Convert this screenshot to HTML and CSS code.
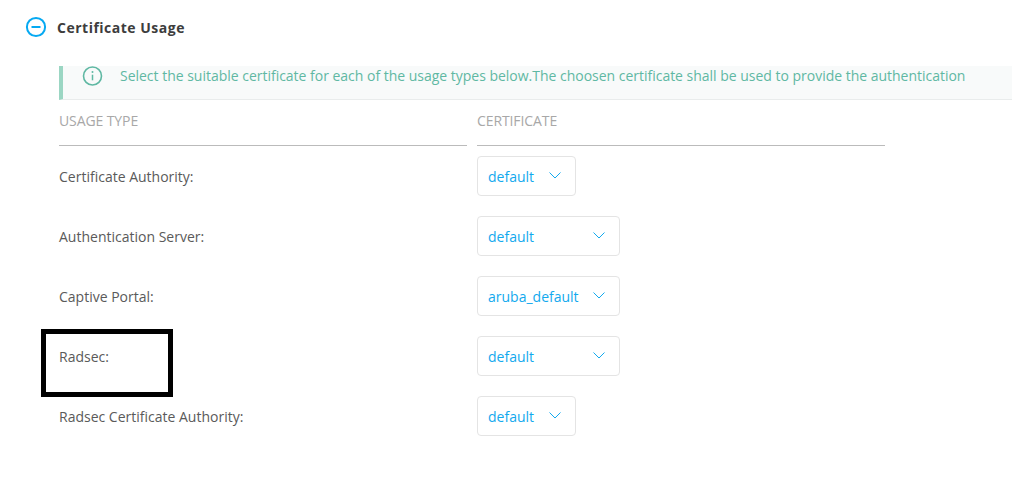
FILE: index.html
```html
<!DOCTYPE html>
<html lang="en">
<head>
<meta charset="utf-8">
<title>Certificate Usage</title>
<link rel="stylesheet" href="styles.css">
</head>
<body>
<main class="page">
  <header class="section-head">
    <svg class="collapse-icon" width="22" height="22" viewBox="0 0 22 22" aria-hidden="true">
      <circle cx="11" cy="11" r="9.1" fill="none" stroke="#05a9f2" stroke-width="2"/>
      <path d="M6.500 11h9" stroke="#05a9f2" stroke-width="2" fill="none"/>
    </svg>
    <h2 class="section-title">Certificate Usage</h2>
  </header>
  <div class="content">
    <div class="notice">
      <svg class="info-icon" width="21" height="20" viewBox="0 0 21 20" aria-hidden="true">
        <circle cx="10.500" cy="10" r="9" fill="none" stroke="#5fb8a3" stroke-width="1.600"/>
        <path d="M10.500 8.700v5.600" stroke="#5fb8a3" stroke-width="1.500" fill="none"/>
        <circle cx="10.500" cy="6" r="1" fill="#5fb8a3"/>
      </svg>
      <span class="notice-text">Select the suitable certificate for each of the usage types below.The choosen certificate shall be used to provide the authentication</span>
    </div>
    <div class="grid">
      <div class="col-head">USAGE TYPE</div>
      <div class="col-head">CERTIFICATE</div>

      <div class="label">Certificate Authority:</div>
      <div class="cell"><div class="select select-short"><span>default</span><svg class="chev" width="12" height="7" viewBox="0 0 12 7"><path d="M.5.5 6 6l5.500-5.500" fill="none" stroke="#12a9ee"/></svg></div></div>

      <div class="label">Authentication Server:</div>
      <div class="cell"><div class="select select-wide"><span>default</span><svg class="chev" width="12" height="7" viewBox="0 0 12 7"><path d="M.5.5 6 6l5.500-5.500" fill="none" stroke="#12a9ee"/></svg></div></div>

      <div class="label">Captive Portal:</div>
      <div class="cell"><div class="select select-wide"><span>aruba_default</span><svg class="chev" width="12" height="7" viewBox="0 0 12 7"><path d="M.5.5 6 6l5.500-5.500" fill="none" stroke="#12a9ee"/></svg></div></div>

      <div class="label">Radsec:</div>
      <div class="cell"><div class="select select-wide"><span>default</span><svg class="chev" width="12" height="7" viewBox="0 0 12 7"><path d="M.5.5 6 6l5.500-5.500" fill="none" stroke="#12a9ee"/></svg></div></div>

      <div class="label">Radsec Certificate Authority:</div>
      <div class="cell"><div class="select select-short"><span>default</span><svg class="chev" width="12" height="7" viewBox="0 0 12 7"><path d="M.5.5 6 6l5.500-5.500" fill="none" stroke="#12a9ee"/></svg></div></div>
    </div>
  </div>
  <div class="highlight"></div>
</main>
</body>
</html>
```
FILE: styles.css
```css
* { box-sizing: border-box; }
html, body { margin: 0; padding: 0; background: #fff; }
body { font-family: "Open Sans", "Liberation Sans", sans-serif; font-size: 14px; color: #555; overflow: hidden; }
.page { position: relative; width: 1012px; height: 491px; padding: 16px 0 0 25px; }
.section-head { display: flex; align-items: center; gap: 10px; height: 22px; }
.collapse-icon { flex: none; }
.section-title { margin: 0; font-size: 14px; font-weight: 700; color: #3d3d3d; letter-spacing: 0.5px; }
.content { margin: 28px 0 0 34px; }
.notice { display: flex; align-items: flex-start; height: 34px; background: #f8fafa; border-left: 4px solid #9bd6c3; border-bottom: 1px solid #e9ecec; padding-left: 19px; color: #5fb8a3; }
.info-icon { flex: none; }
.notice-text { margin-left: 17px; line-height: 20px; white-space: nowrap; letter-spacing: -0.015px; }
.grid { display: grid; grid-template-columns: 408px 408px; column-gap: 10px; grid-template-rows: 46px; grid-auto-rows: 60px; }
.col-head { border-bottom: 1px solid #bbb; color: #a8a8a8; font-size: 14px; letter-spacing: -0.1px; line-height: 42px; height: 46px; }
.label { display: flex; align-items: center; color: #5a5a5a; height: 60px; }
.cell { display: flex; align-items: center; height: 60px; }
.select { display: flex; align-items: center; justify-content: space-between; height: 40px; border: 1px solid #e4e4e4; border-radius: 4px; background: #fff; color: #12a9ee; padding: 0 14px 0 10px; }
.select-short { width: 99px; }
.select-wide { width: 143px; }
.chev { flex: none; margin-top: -1px; }
.highlight { position: absolute; left: 41px; top: 329px; width: 132px; height: 68px; border: 5px solid #000; }
```
